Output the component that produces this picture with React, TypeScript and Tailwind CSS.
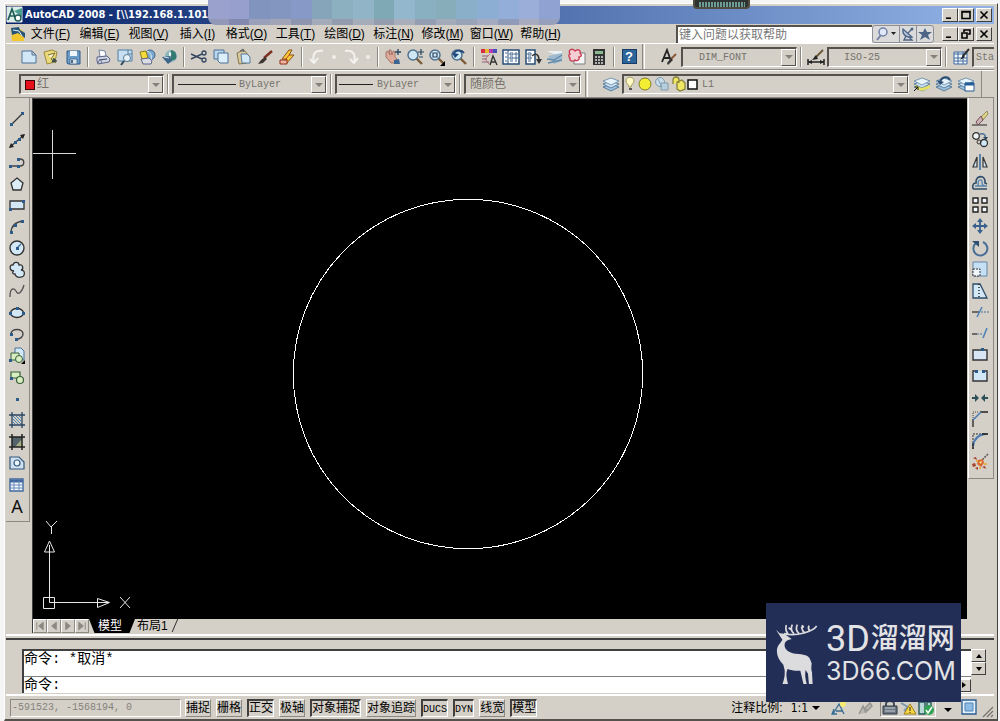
import React from "react";

type Children = { children?: React.ReactNode };

const UI = "font-['Liberation_Sans','Noto_Sans_CJK_SC',sans-serif]";
const MONO = "font-['Liberation_Mono','Noto_Sans_CJK_SC',monospace]";

const DARK = "#27445f";
const BLUE = "#4a7099";
const PALE = "#d3e8f6";

const Icon = ({ children }: Children) => (
    <svg viewBox="0 0 18 18" className="block h-[18px] w-[18px]" fill="none" aria-hidden="true">{children}</svg>
);

const ToolButton = (props: { label: string, children?: React.ReactNode }) => (
    <button title={props.label} aria-label={props.label} className="flex h-5 w-[22px] shrink-0 items-center justify-center">
        <Icon>{props.children}</Icon>
    </button>
);

const Sep = () => (
    <div className="flex w-2 shrink-0 justify-center">
        <div className="h-5 w-0.5 border-l border-r border-l-[#8c8983] border-r-white"/>
    </div>
);

const Dot = () => <div className="flex w-3 shrink-0 justify-center"><div className="h-1 w-1 rounded-full bg-[#f0eeea]"/></div>;

const Layers = () => (
    <>
        <path d="M1 12l8-3 8 3-8 4z" fill="#9fc3df" stroke="#41688a" strokeWidth=".8"/>
        <path d="M1 9l8-3 8 3-8 4z" fill="#cfe4f3" stroke="#41688a" strokeWidth=".8"/>
        <path d="M1 6l8-3 8 3-8 4z" fill="#e8f4fb" stroke="#5c83a5" strokeWidth=".8"/>
    </>
);

const Lens = () => (
    <>
        <path d="M10 10l6 6" stroke="#7c5a36" strokeWidth="2.4"/>
        <circle cx="7" cy="7" r="5" fill="#cfe7f5" stroke="#52718d" strokeWidth="1.5"/>
    </>
);

// standard toolbar, one array per separated group
const standardTools = [
    [
        { label: "新建", art: <path d="M2 3h10l4 4v8H2z M12 3v4h4" fill={PALE} stroke={BLUE}/> },
        {
            label: "打开", art: <>
                <path d="M2 4l8-2 5 2-2 10-8 2z" fill="#e9d979" stroke="#9b8a3c"/>
                <path d="M6 7l7-2-4 6 5 4" fill="#f9f4c6" stroke="#776a35"/>
                <path d="M15 13l-5 1 2-4" fill="#3e4d4a" stroke="#3e4d4a"/>
            </>
        },
        {
            label: "保存", art: <>
                <path d="M3 3h13v13H4l-1-1z" fill="#6b9bc7" stroke="#315b86"/>
                <path d="M6 3h7v5H6z" fill="#eef6fb"/><path d="M6 11h7v5H6z" fill="#d8e4ed" stroke="#315b86" strokeWidth=".7"/>
                <path d="M8 12v3" stroke="#27445f" strokeWidth="1.5"/>
            </>
        },
    ],
    [
        {
            label: "打印", art: <>
                <path d="M5 2l6 1 1 5-6 1z" fill="#fff" stroke="#7885a8"/>
                <path d="M3 9l10-1 3 3-1 3-11 2-1-3z" fill="#cfd4e4" stroke="#5d6688"/>
                <path d="M5 12l8-1" stroke="#3c4560"/><circle cx="6" cy="14" r="1.5" fill="#fff" stroke="#5d6688"/>
            </>
        },
        {
            label: "打印预览", art: <>
                <path d="M2 2h14v11H2z" fill="#c7dff0" stroke="#4f7da4"/><path d="M12 2v4h4" stroke="#4f7da4"/>
                <circle cx="11" cy="10" r="3.5" fill="#e6f3fa" stroke="#5d7b92"/><path d="M8 13l-3 4" stroke="#2f4b63" strokeWidth="2"/>
            </>
        },
        {
            label: "发布", art: <>
                <circle cx="12" cy="7" r="5" fill="#7aa8cf" stroke="#3d658a"/><path d="M9 3c4 2 5 5 4 9" stroke="#e6f2f9"/>
                <path d="M2 4l6-1 2 7-6 1z" fill="#f3db3c" stroke="#8d7c18"/>
                <path d="M3 11l8-1 3 3-1 3H5z" fill="#dadde6" stroke="#5d6688"/>
            </>
        },
        {
            label: "三维DWF", art: <>
                <circle cx="11" cy="8" r="6" fill="#88b7bd"/><path d="M11 2c5 1 6 5 5 9l-5 2z" fill="#347a72"/>
                <path d="M9 4c3 0 3 4 0 5" fill="#e9f5ef"/><path d="M2 9l8-1 2 5-4 3z" fill="#3d6689"/><path d="M4 9l5 1" stroke="#cfe0ee"/>
            </>
        },
    ],
    [
        {
            label: "剪切", art: <>
                <path d="M1 6l11 5M1 11l11-5" stroke="#34475e" strokeWidth="1.4"/>
                <circle cx="14" cy="5" r="2" stroke="#34475e" strokeWidth="1.3"/><circle cx="14" cy="12" r="2" stroke="#34475e" strokeWidth="1.3"/>
            </>
        },
        { label: "复制", art: <><path d="M2 2h10v9H2z" fill="#b8d5ea" stroke={BLUE}/><path d="M6 5h10v10H8l-2-2z" fill="#dceefa" stroke={BLUE}/></> },
        {
            label: "粘贴", art: <>
                <path d="M3 5l7-3 5 6-2 7-8 1z" fill="#d9caa0" stroke="#857447"/>
                <path d="M7 6h6l3 3v6H8z" fill="#d3e8f6" stroke="#597c98"/><path d="M6 3l3-2 1 3" fill="#777" stroke="#666"/>
            </>
        },
        { label: "特性匹配", art: <><path d="M16 3L8 10" stroke="#7c2f20" strokeWidth="2.4"/><path d="M9 9l2 2-4 4-5 1 3-4z" fill="#3c3631"/></> },
        {
            label: "块编辑器", art: <>
                <path d="M11 2L4 11h5l-1 5 8-9h-5l3-5z" fill="#f5cc39" stroke="#8c4f18"/>
                <path d="M2 12h7v4H2z" fill="#f1b7a0" stroke="#8c2f18"/><path d="M12 6l-5 6" stroke="#c43c22"/>
            </>
        },
    ],
];

const undoTools = [
    { label: "放弃", art: <path d="M15 3C6 2 4 7 6 15M2 11l4 4 4-5" stroke="#f4f2ee" strokeWidth="2"/> },
    { label: "重做", art: <path d="M3 3c9-1 11 4 9 12M8 11l4 4 4-5" stroke="#f4f2ee" strokeWidth="2"/> },
];

const viewTools = [
    [
        {
            label: "实时平移", art: <>
                <path d="M2 4l2-1 2 4-1-5 2 0 1 5 1-4 2 1v5l2 2-3 4H7L2 9z" fill="#dcaa9a" stroke="#9d6559" strokeWidth=".8"/>
                <path d="M14 1v6M11 4h6" stroke={DARK} strokeWidth="1.3"/><path d="M10 12l5-1 1 5h-6z" fill="#3d6593"/>
            </>
        },
        { label: "实时缩放", art: <><Lens/><path d="M15 1v6M12 4h6M13 9h4" stroke={DARK} strokeWidth="1.2"/></> },
        { label: "窗口缩放", art: <><Lens/><path d="M5 5h4v4H5z" stroke={DARK} strokeWidth="1.2"/><path d="M17 13v5h-5z" fill="#000"/></> },
        { label: "缩放上一个", art: <><Lens/><path d="M4 7c0-5 7-6 10-2" stroke="#1e477a" strokeWidth="2"/><path d="M2 5l3 5 4-4z" fill="#1e477a"/></> },
    ],
    [
        {
            label: "特性", art: <>
                <path d="M1 1h4v4H1z" fill="#d52e44"/><path d="M5 1h4v4H5z" fill="#e6b72f"/><path d="M9 1h4v4H9z" fill="#b53bb0"/><path d="M13 1h4v4h-4z" fill="#4851b8"/>
                <path d="M2 8h6M2 11h5M2 14h7" stroke="#8f6179"/><path d="M10 6l-5 5 4 5" stroke="#bc7183"/><path d="M10 17l3-9 4 9M11 14h5" stroke="#333" strokeWidth="1.4"/>
            </>
        },
        {
            label: "设计中心", art: <>
                <path d="M1 2h16v14H1z" fill="#fff" stroke="#294e79" strokeWidth="1.5"/>
                <path d="M6 2v14" stroke="#294e79"/><path d="M3 5h2M3 9h2M3 13h2M8 5h3v2H8zM13 5h2v2h-2zM8 9h3v2H8zM13 9h2v2h-2zM8 13h3M13 13h2" stroke="#426994"/>
            </>
        },
        {
            label: "工具选项板", art: <>
                <path d="M2 2h9v14H2z" fill="#fff" stroke="#294e79" strokeWidth="1.5"/><path d="M4 5h3v2H4zM4 9h3v2H4zM4 13h3" stroke="#426994"/>
                <path d="M8 8c4-4 7-1 7 4" stroke="#333" strokeWidth="1.4"/><path d="M12 11h6l-3 5z" fill="#333"/>
            </>
        },
        { label: "图纸集", art: <><path d="M1 3h15v3H8z" fill="#e9f1f6"/><path d="M2 8l14-3v8l-8 3z" fill="#9ebad0"/><path d="M1 11l7 1 8-5M2 15l14-3" stroke="#628aa9" strokeWidth="1.3"/></> },
        {
            label: "标记集", art: <>
                <path d="M6 5h11v11H6z" fill="#f5f5f5" stroke="#7d7d7d"/>
                <path d="M2 2c3-2 4 0 5 1 3-3 6 0 5 2 3 3 0 4-1 4 1 4-3 4-4 3-2 2-6 1-5-2-2-2-1-4 0-4-1-2-1-3 0-4z" fill="#f4ced4" stroke="#c63f57" strokeWidth="1.4"/>
            </>
        },
        {
            label: "计算器", art: <>
                <path d="M3 1h12v16H3z" fill="#333"/><path d="M5 3h8v3H5z" fill="#8bb98e"/>
                <path d="M5 9h8M5 12h8M5 15h8" stroke="#ddd" strokeWidth="1.6" strokeDasharray="2 1"/>
            </>
        },
    ],
];

const N = ({ x, y }: { x: number, y: number }) => <rect x={x - 1} y={y - 1} width="3" height="3" fill="#2d5b8b"/>;

const drawTools = [
    { label: "直线", art: <><path d="M3 15L15 3" stroke="#333" strokeWidth="1.3"/><N x={3} y={14}/><N x={14} y={3}/></> },
    { label: "构造线", art: <><path d="M2 15L16 3" stroke="#333" strokeWidth="1.3"/><path d="M1 16l2-5 3 4zM17 2l-5 1 3 4z" fill="#222"/><N x={7} y={10}/><N x={11} y={7}/></> },
    { label: "多段线", art: <><path d="M2 13h10M10 6h2c5 0 5 7 0 7" stroke="#444" strokeWidth="1.4"/><N x={2} y={13}/><N x={10} y={13}/><N x={10} y={6}/></> },
    { label: "正多边形", art: <path d="M9 3l6 5-2 7H5L3 8z" fill="#dcedf7" stroke="#333" strokeWidth="1.3"/> },
    { label: "矩形", art: <><path d="M2 5h14v8H2z" fill={PALE} stroke="#333" strokeWidth="1.3"/><N x={2} y={13}/><N x={15} y={5}/></> },
    { label: "圆弧", art: <><path d="M3 15C3 8 8 4 15 3" stroke="#444" strokeWidth="1.3"/><N x={3} y={14}/><N x={7} y={7}/><N x={14} y={3}/></> },
    { label: "圆", art: <><circle cx="9" cy="9" r="7" fill={PALE} stroke="#333" strokeWidth="1.4"/><path d="M9 9l4-4" stroke={BLUE} strokeWidth="1.4"/><N x={9} y={9}/></> },
    { label: "修订云线", art: <path d="M6 10C1 10 1 3 5 4c1-4 6-3 6 0 4-1 5 4 2 5 5 0 4 7 0 7-3 1-6-1-6-3-3 0-3-2-1-3z" fill={PALE} stroke="#333" strokeWidth="1.3"/> },
    { label: "样条曲线", art: <path d="M2 15C2 5 6 6 8 9c2 5 6 1 8-6" stroke="#555" strokeWidth="1.3"/> },
    { label: "椭圆", art: <><ellipse cx="9" cy="9" rx="6.5" ry="4.5" fill={PALE} stroke="#333" strokeWidth="1.4"/><N x={2} y={9}/><N x={15} y={9}/><N x={9} y={4}/></> },
    { label: "椭圆弧", art: <><path d="M3 9c0-6 12-6 12 0 0 3-3 5-6 5" stroke="#444" strokeWidth="1.4"/><N x={3} y={9}/><N x={8} y={14}/></> },
    {
        label: "插入块", art: <>
            <path d="M7 1h6l3 3v9H7z" fill={PALE} stroke={BLUE}/><path d="M3 6h8v7H3z" fill="#d9edc3" stroke="#385f37"/>
            <circle cx="11" cy="12" r="3.5" stroke="#385f37" fill="#d9edc3"/><path d="M17 13v4h-4z" fill="#000"/><N x={2} y={13}/>
        </>
    },
    { label: "创建块", art: <><path d="M3 4h9v6H3z" fill="#d9edc3" stroke="#385f37" strokeWidth="1.2"/><circle cx="12" cy="12" r="3.5" fill="#d9edc3" stroke="#385f37" strokeWidth="1.2"/><N x={3} y={10}/></> },
    { label: "点", art: <N x={9} y={9}/> },
    { label: "图案填充", art: <><path d="M4 1v16M14 1v16M1 4h16M1 14h16" stroke={DARK} strokeWidth="1.3"/><path d="M5 5l8 8M8 5l5 5M5 8l5 5M11 5l2 2M5 11l2 2" stroke="#4c82ac"/></> },
    { label: "渐变色", art: <><path d="M4 4h10v10H4z" fill="#55636b"/><path d="M14 6v8H7z" fill="#a7b282"/><path d="M4 1v16M14 1v16M1 4h16M1 14h16" stroke="#222" strokeWidth="1.5"/></> },
    { label: "面域", art: <><path d="M2 3h9l5 5v7H2z" fill="#cfe0f1" stroke="#34577b" strokeWidth="1.2"/><circle cx="9" cy="9" r="3" fill="#edf6fb" stroke="#34577b" strokeWidth="1.2"/></> },
    { label: "表格", art: <><path d="M2 3h13v12H2z" fill="#f1f7fb" stroke="#41699e" strokeWidth="1.4"/><path d="M2 5h13" stroke="#41699e" strokeWidth="3"/><path d="M2 9h13M2 12h13M6 5v10M11 5v10" stroke="#6a8cba"/></> },
];

const modifyTools = [
    { label: "删除", art: <><path d="M1 15h15" stroke="#222"/><path d="M16 1l-6 6 2 3 5-6z" fill="#ddd185" stroke="#777141" strokeWidth=".7"/><path d="M10 6l-5 6 2 3 5-5z" fill="#c9b3b6" stroke="#7b4b55"/></> },
    { label: "复制对象", art: <><circle cx="5" cy="5" r="3.3" fill="#eef5f9" stroke="#333" strokeWidth="1.3"/><circle cx="13" cy="12" r="3.5" fill={PALE} stroke="#333" strokeWidth="1.3"/><circle cx="8" cy="11" r="2" stroke="#333"/><path d="M9 3c4-1 6 1 5 4" stroke={BLUE} strokeWidth="1.5"/><path d="M12 6h5l-2 3z" fill={DARK}/></> },
    { label: "镜像", art: <><path d="M6 4v10H2zM12 4v10h4z" fill={PALE} stroke="#333" strokeWidth="1.2"/><path d="M9 1v16" stroke="#3c6fa5" strokeWidth="1.6"/></> },
    { label: "偏移", art: <><path d="M2 15h14M2 15C1 10 3 9 5 9c-1-8 10-9 9 0l2 1" stroke="#2e4c68" strokeWidth="1.6"/><path d="M4 12h12M5 12c2 0 3-1 2-4 1-3 5-3 4 1 0 3 3 3 5 3" stroke="#5a87b0" strokeWidth="1.4"/></> },
    { label: "阵列", art: <path d="M2 2h5v5H2zM11 2h5v5h-5zM2 11h5v5H2zM11 11h5v5h-5z" fill="#f4f8fb" stroke="#222" strokeWidth="1.4"/> },
    { label: "移动", art: <><path d="M9 3v12M3 9h12" stroke="#38608e" strokeWidth="1.8"/><path d="M9 1l3 4H6zM9 17l3-4H6zM1 9l4-3v6zM17 9l-4-3v6z" fill="#38608e"/></> },
    { label: "旋转", art: <><path d="M5 4a7 7 0 1 0 7-1" stroke="#496f96" strokeWidth="2"/><path d="M1 2h7v6z" fill="#2f4e70"/></> },
    { label: "缩放", art: <><path d="M2 2h14v14H2z" fill="#c5dff4" stroke="#6686a8"/><path d="M2 9h7v7H2z" fill="#eff6fa" stroke="#333" strokeDasharray="2 1"/></> },
    { label: "拉伸", art: <><path d="M2 2h7l7 14H2z" fill={PALE} stroke="#2e4c68" strokeWidth="1.3"/><path d="M8 2v14" stroke="#222" strokeDasharray="1 2" strokeWidth="1.5"/></> },
    { label: "修剪", art: <><path d="M1 9h7" stroke="#333" strokeWidth="1.3"/><path d="M10 9h8" stroke="#4a7099" strokeDasharray="2 1"/><path d="M6 14l5-10" stroke="#4f82b6" strokeWidth="1.6"/></> },
    { label: "延伸", art: <><path d="M1 10h5" stroke="#333" strokeWidth="1.3"/><path d="M6 10h6" stroke="#4a7099" strokeDasharray="2 1"/><path d="M12 14l4-10" stroke="#4f82b6" strokeWidth="1.6"/></> },
    { label: "打断于点", art: <><path d="M2 4h14v10H2z" fill="#d7e5f4" stroke="#333" strokeWidth="1.4"/><N x={11} y={3}/></> },
    { label: "打断", art: <><path d="M5 4H2v10h14V4h-3" fill={PALE} stroke="#333" strokeWidth="1.4"/><N x={5} y={4}/><N x={12} y={4}/></> },
    { label: "合并", art: <><path d="M1 9h5M12 9h5" stroke="#2d5058" strokeWidth="1.8"/><path d="M4 5l4 4-4 4zM14 5l-4 4 4 4z" fill="#2d5058"/></> },
    { label: "倒角", art: <><path d="M9 2h8M2 9v8" stroke="#222" strokeWidth="1.3"/><path d="M2 2h6M2 3v6" stroke="#444" strokeDasharray="1 1"/><path d="M2 10l8-8" stroke="#4a7cb0" strokeWidth="1.6"/></> },
    { label: "圆角", art: <><path d="M2 2h15M2 3v14" stroke="#333" strokeDasharray="2 1"/><path d="M2 14C3 7 6 3 14 2" stroke="#4a7cb0" strokeWidth="2"/><path d="M2 11v6M11 2h6" stroke="#222" strokeWidth="1.3"/></> },
    {
        label: "分解", art: <>
            <path d="M17 1l-6 6" stroke="#555" strokeWidth="1.5" strokeDasharray="2 1"/>
            <path d="M7 7l5-1 1 4-3 4-4-3z" fill="#d8682f"/><path d="M8 9l3-1-1 3z" fill="#f8e29a"/>
            <path d="M2 5l3-1 1 3zM1 11l3-1 1 3-3 1zM4 15l3-1v3zM11 14l3-1 1 3z" fill="#a8402a"/><path d="M5 7h2v2H5zM8 14h2v2H8zM13 10h3v2h-3z" fill="#e8b04c"/>
        </>
    },
];

const menus = [
    ["文件", "F"], ["编辑", "E"], ["视图", "V"], ["插入", "I"], ["格式", "O"], ["工具", "T"],
    ["绘图", "D"], ["标注", "N"], ["修改", "M"], ["窗口", "W"], ["帮助", "H"],
];

const toggles = [
    { name: "捕捉", on: false }, { name: "栅格", on: false }, { name: "正交", on: true }, { name: "极轴", on: false },
    { name: "对象捕捉", on: true }, { name: "对象追踪", on: false }, { name: "DUCS", on: true }, { name: "DYN", on: true },
    { name: "线宽", on: false }, { name: "模型", on: true },
];

const mosaicTop = ["bg-[#9aa1cc]", "bg-[#97a0cc]", "bg-[#8194bd]", "bg-[#8296c0]", "bg-[#8799c6]", "bg-[#86a5ba]", "bg-[#8cb0bf]", "bg-[#91b4c6]", "bg-[#7fa9b5]", "bg-[#93b8cd]", "bg-[#89b0c0]", "bg-[#88adba]", "bg-[#8aafc8]", "bg-[#8baed2]", "bg-[#93aed8]", "bg-[#9baed9]", "bg-[#8fa2d2]"];
const mosaicBottom = ["bg-[#9198b8]", "bg-[#8389ae]", "bg-[#9ba0ba]", "bg-[#a0a5b8]", "bg-[#8e95ae]", "bg-[#a3aab8]", "bg-[#929cae]", "bg-[#a6adba]", "bg-[#949db0]", "bg-[#a8afbb]", "bg-[#939eb2]", "bg-[#a3abba]", "bg-[#98a3b8]", "bg-[#a4abc0]", "bg-[#8f9bb8]", "bg-[#a6acbd]", "bg-[#969fbc]"];

const DropDown = (props: { label: string, value: string, box: string, pad: string, children?: React.ReactNode }) => (
    <div className={"relative h-5 border border-t-2 border-l-2 border-t-[#55524d] border-l-[#55524d] border-r-white border-b-white " + props.box}>
        <select aria-label={props.label} className={"block h-full w-full appearance-none bg-[#d4d0c8] text-[#75726c] outline-none " + props.pad}>
            <option>{props.value}</option>
        </select>
        {props.children}
        <span className="pointer-events-none absolute top-0 right-0 flex h-full w-[15px] items-center justify-center border border-t-white border-l-white border-r-[#55524d] border-b-[#55524d] bg-[#d4d0c8]">
            <svg viewBox="0 0 8 4" className="h-1 w-2"><path d="M0 0h8L4 4z" fill="#85827c"/></svg>
        </span>
    </div>
);

const WindowButton = (props: { label: string, d: string }) => (
    <button aria-label={props.label} className="flex h-[14px] w-4 items-center justify-center border border-t-white border-l-white border-r-[#404040] border-b-[#404040] bg-[#d4d0c8]">
        <svg viewBox="0 0 10 10" className="h-[10px] w-[10px]" fill="none"><path d={props.d} stroke="#000" strokeWidth="1.6"/></svg>
    </button>
);

const WindowButtons = (props: { restore?: boolean }) => (
    <div className="flex">
        <WindowButton label="最小化" d="M1 8.2h5"/>
        <WindowButton label={props.restore ? "还原" : "最大化"} d={props.restore ? "M3 3V1h6v4H7M1 4h5v5H1z" : "M1 1.5h8v7H1zM1 2h8"}/>
        <div className="w-0.5"/>
        <WindowButton label="关闭" d="M1.500 1.500l7 7M8.500 1.500l-7 7"/>
    </div>
);

const TitleBar = () => (
    <div className="flex h-[18px] items-center bg-linear-to-r from-[#0a246a] to-[#92b3e6] pr-0.5">
        <svg viewBox="0 0 18 18" className="mr-px h-[18px] w-[18px]" fill="none">
            <path d="M1 1h15v15H1z" fill="#d8eee6" stroke="#e6e6e6"/>
            <path d="M2 14L6 3l4 11M3 10h6" stroke="#215c58" strokeWidth="1.7"/><path d="M8 5l8-3v9" fill="#4c9e91"/>
            <circle cx="12" cy="12" r="3" stroke="#215c58" strokeWidth="1.4" fill="#fff"/>
        </svg>
        <h1 className="flex-1 text-[11px] font-bold whitespace-pre text-white font-['DejaVu_Sans_Condensed','Liberation_Sans',sans-serif]">{"AutoCAD 2008 - [\\\\192.168.1.101"}</h1>
        <WindowButtons/>
    </div>
);

const MenuBar = () => (
    <div className="flex h-[19px] items-center pr-0.5">
        <svg viewBox="0 0 16 16" className="ml-1 h-4 w-4">
            <path d="M1 2h8l5 4v9H2z" fill="#f1c62e"/><path d="M1 2l8-1 1 3 5 3v5L8 7 2 9z" fill="#26557c"/><path d="M3 4l6 1 3 5" stroke="#e6f2f3" fill="none"/>
        </svg>
        <nav className="flex flex-1 items-center">
            {menus.map(([name, key]) => (
                <button key={key} className="h-[18px] w-[49px] shrink-0 text-[12px] leading-[18px] whitespace-nowrap text-black">
                    {name}(<span className="underline">{key}</span>)
                </button>
            ))}
        </nav>
        <input aria-label="帮助搜索" placeholder="键入问题以获取帮助" className="h-[18px] w-[196px] border-t-2 border-l-2 border-t-[#55524d] border-l-[#55524d] bg-white px-px text-[12px] leading-4 outline-none placeholder:text-[#777]"/>
        <div className="mr-2 flex h-[18px] items-center rounded-[3px] border border-[#8f8f98] bg-[#dcdbdc]">
            <button aria-label="搜索" className="flex w-[27px] items-center justify-between border-r border-[#8f8f98] px-px">
                <svg viewBox="0 0 16 16" className="h-4 w-4" fill="none"><path d="M3 14l4-5" stroke="#7380a5" strokeWidth="2"/><circle cx="9" cy="6" r="4" fill="#dfe8f8" stroke="#7380a5" strokeWidth="1.500"/></svg>
                <svg viewBox="0 0 5 3" className="mr-0.5 h-[3px] w-[5px]"><path d="M0 0h5L2.500 3z" fill="#222"/></svg>
            </button>
            <button aria-label="通讯中心" className="border-r border-[#8f8f98]">
                <svg viewBox="0 0 16 16" className="h-4 w-4" fill="none"><path d="M3 3c-1 6 4 9 9 8z" fill="#b9c6dc" stroke="#4d6486" strokeWidth="1.400"/><path d="M8 7l4-4M6 10l-2 4h8l-3-3" stroke="#4d6486" strokeWidth="1.400"/><circle cx="12" cy="3" r="1.500" fill="#4d6486"/></svg>
            </button>
            <button aria-label="收藏夹">
                <svg viewBox="0 0 16 16" className="h-4 w-4"><path d="M8 2l2 4h5l-4 3 2 5-5-3-5 3 2-5-4-3h5z" fill="#4d6486"/></svg>
            </button>
        </div>
        <WindowButtons restore/>
    </div>
);

const StandardBar = () => (
    <div className={"flex h-[27px] items-center overflow-hidden border-t border-b border-t-white border-b-[#8c8983] pl-3 text-[10px] " + MONO}>
        {standardTools.map((group, i) => (
            <React.Fragment key={i}>
                {group.map(t => <ToolButton key={t.label} label={t.label}>{t.art}</ToolButton>)}
                <Sep/>
            </React.Fragment>
        ))}
        {undoTools.map(t => <React.Fragment key={t.label}><ToolButton label={t.label}>{t.art}</ToolButton><Dot/></React.Fragment>)}
        {viewTools.map((group, i) => (
            <React.Fragment key={i}>
                <Sep/>
                {group.map(t => <ToolButton key={t.label} label={t.label}>{t.art}</ToolButton>)}
            </React.Fragment>
        ))}
        <Sep/>
        <button aria-label="帮助" className="flex w-[22px] shrink-0 justify-center">
            <span className="h-[15px] w-[15px] border border-[#163c69] bg-[#2e6599] text-center text-[13px] leading-[14px] font-bold text-white font-['Liberation_Sans',sans-serif]">?</span>
        </button>
        <div className="mr-3 ml-0.5 h-[27px] w-[3px] shrink-0 border-l border-r border-l-[#8c8983] border-r-white"/>
        <ToolButton label="文字样式">
            <path d="M3 14L8 2l4 11M5 10h6" stroke="#222" strokeWidth="1.800"/><path d="M17 6l-5 5" stroke="#8b5a37" strokeWidth="2"/><path d="M12 10l2 2-5 5-1-2z" fill="#333"/>
        </ToolButton>
        <div className="w-0.5 shrink-0"/>
        <DropDown label="文字样式" value="DIM_FONT" box="w-[116px] shrink-0" pad="pl-4"/>
        <Sep/>
        <ToolButton label="标注样式">
            <path d="M1 14h16M1 11v6M17 11v6" stroke="#222" strokeWidth="1.500"/><path d="M1 14l4-2v4zM17 14l-4-2v4z" fill="#222"/><path d="M16 2L8 10" stroke="#6d5a37" strokeWidth="2"/><path d="M9 7l2 4-6 1z" fill="#222"/>
        </ToolButton>
        <DropDown label="标注样式" value="ISO-25" box="w-[115px] shrink-0" pad="pl-[15px]"/>
        <Sep/>
        <ToolButton label="表格样式">
            <path d="M2 4h13v12H2z" fill="#f1f7fb" stroke="#41699e"/><path d="M2 6h13M2 10h13M2 13h13M6 4v12M11 4v12" stroke="#41699e"/><path d="M17 1l-6 7" stroke="#333" strokeWidth="2"/><path d="M11 7l2 2-5 3z" fill="#222"/>
        </ToolButton>
        <DropDown label="表格样式" value="Standard" box="w-[115px] shrink-0" pad="pl-0.5"/>
    </div>
);

const PropertiesBar = () => (
    <div className={"flex h-[27px] items-center border-t border-t-white pl-[13px] text-[10px] " + MONO}>
        <DropDown label="颜色" value="红" box="w-[145px]" pad="pl-4 text-[12px]">
            <span className="absolute top-1 left-1 h-[10px] w-[10px] border border-[#3b0000] bg-[#e8101a]"/>
        </DropDown>
        <Sep/>
        <DropDown label="线型" value="ByLayer" box="w-[155px]" pad="pl-[65px]">
            <span className="absolute top-2 left-1 h-px w-[58px] bg-[#222]"/>
        </DropDown>
        <Sep/>
        <DropDown label="线宽" value="ByLayer" box="w-[121px]" pad="pl-10">
            <span className="absolute top-2 left-0.5 h-px w-[34px] bg-[#222]"/>
        </DropDown>
        <Sep/>
        <DropDown label="打印样式" value="随颜色" box="w-[117px]" pad="pl-1 text-[12px]"/>
        <div className="mr-3 ml-1 h-[27px] w-[3px] border-l border-r border-l-[#8c8983] border-r-white"/>
        <ToolButton label="图层特性管理器"><Layers/></ToolButton>
        <div className="min-w-0 flex-1">
            <DropDown label="图层" value="L1" box="w-full" pad="pl-[78px]">
                <svg viewBox="0 0 76 16" className="absolute top-0 left-0 h-4 w-[76px]" fill="none">
                    <path d="M5 11c0-3-3-3-3-6 0-5 8-5 8 0 0 3-3 3-3 6z" fill="#fff9c4" stroke="#a39a58"/><path d="M5 13h3" stroke="#555" strokeWidth="2"/>
                    <circle cx="21" cy="8" r="6" fill="#f3ee33" stroke="#807d27"/>
                    <circle cx="36" cy="6" r="4.500" fill="#c9dce7" stroke="#7f9db1"/><path d="M37 7h7v7h-7zM34 3l4 8" fill="#b7cedd" stroke="#7f9db1"/>
                    <path d="M49 8V4c0-4 6-4 6 0v3M53 6l5-2 3 3v6l-5 2-3-2z" fill="#f0e865" stroke="#85803a" strokeWidth="1.300"/>
                    <path d="M64 4h9v9h-9z" fill="#fff" stroke="#111" strokeWidth="1.500"/>
                </svg>
            </DropDown>
        </div>
        <div className="flex pl-0.5">
            <ToolButton label="将对象的图层置为当前"><Layers/><path d="M2 10l7 3 8-3v3l-8 3-6-2z" fill="#e5e164"/><path d="M1 16l4-4M5 15v-3H2" stroke="#111"/></ToolButton>
            <ToolButton label="上一个图层"><Layers/><path d="M5 7c2-6 8-6 10-2" stroke="#294c73" strokeWidth="2"/><path d="M2 5l3 5 4-3z" fill="#294c73"/></ToolButton>
            <ToolButton label="图层状态管理器"><Layers/><path d="M8 8h9v8H8z" fill="#fff" stroke="#245c98"/><path d="M8 9h9" stroke="#245c98" strokeWidth="3"/></ToolButton>
        </div>
        <div className="mr-3 ml-1 h-[27px] w-px bg-[#8c8983]"/>
    </div>
);

const Drawing = () => (
    <div className="relative min-h-[400px] flex-1 overflow-hidden bg-black">
        {/* crosshair and the circle */}
        <svg className="absolute top-0 left-0 h-[520px] w-[935px]" fill="none" stroke="#fff" strokeWidth="1" shapeRendering="crispEdges" aria-label="图形">
            <path d="M0 54.500h43M19.500 31v49" stroke="#d8d8d8"/>
            <circle cx="435" cy="275" r="174.700"/>
        </svg>
        {/* UCS icon */}
        <svg viewBox="0 0 110 110" className="absolute bottom-0 left-0 h-[110px] w-[110px]" fill="none" stroke="#e8e8e8" strokeWidth="1">
            <path d="M10.500 88.500h11v11h-11zM16.500 93.500V43M16.500 93.500H76M16.500 32l-5 11h10zM76.500 93.500l-12-4v9z M16.500 36v7M65 93.500l10 0"/>
            <path d="M13 12l5 6 6-6M18.500 18v7M87 88l10 11M97 88L87 99"/>
        </svg>
    </div>
);

const SheetTabs = () => (
    <div className="flex h-[14px] items-stretch text-[12px] leading-[14px]">
        {[["第一个", "M3 2v8M10 2v8L5 6z"], ["上一个", "M9 2v8L4 6z"], ["下一个", "M4 2v8l5-4z"], ["最后一个", "M3 2v8l5-4zM10 2v8"]].map(([label, d]) => (
            <button key={label} aria-label={label} className="w-[14px] border border-t-white border-l-white border-r-[#8c8983] border-b-[#8c8983]">
                <svg viewBox="0 0 13 12" className="h-3 w-3"><path d={d} fill="#8c8983" stroke="#8c8983"/></svg>
            </button>
        ))}
        <button className="w-[46px] bg-black pr-1 text-center text-white [clip-path:polygon(0_0,100%_0,88%_100%,12%_100%)]">模型</button>
        <button className="flex items-stretch pl-0.5 text-black">
            布局1
            <svg viewBox="0 0 12 15" className="h-[14px] w-3"><path d="M4 14l6-14" stroke="#222"/></svg>
        </button>
    </div>
);

const ScrollButton = (props: { label: string, d: string }) => (
    <button aria-label={props.label} className="flex h-[13px] w-[15px] items-center justify-center border border-t-white border-l-white border-r-[#404040] border-b-[#404040] bg-[#d4d0c8]">
        <svg viewBox="0 0 6 6" className="h-1.5 w-1.5"><path d={props.d} fill="#000"/></svg>
    </button>
);

const CommandLine = () => (
    <div className={"mt-[9px] mr-2 ml-4 flex text-[14px] leading-4 text-black " + MONO}>
        <div className="min-w-0 flex-1 border-t-2 border-l-2 border-[#404040] bg-white">
            <div className="h-[26px] border-b border-[#808080] whitespace-pre">命令: *取消*</div>
            <label className="flex h-4 items-center">
                命令:
                <input className="h-4 min-w-0 flex-1 bg-white outline-none"/>
                <ScrollButton label="向右滚动" d="M1 0v6l4-3z"/>
            </label>
        </div>
        <div className="flex flex-col">
            <ScrollButton label="向上滚动" d="M0 5h6L3 1z"/>
            <ScrollButton label="向下滚动" d="M0 1h6L3 5z"/>
        </div>
    </div>
);

const StatusBar = () => (
    <div className={"mt-px flex h-[25px] items-center gap-1 border-t-2 border-white pl-1 text-[12px] " + UI}>
        <output className={"h-[18px] w-[171px] border border-t-[#8c8983] border-l-[#8c8983] border-r-white border-b-white px-px text-[10px] leading-4 whitespace-pre text-[#85827c] " + MONO}>-591523, -1568194, 0</output>
        <div className="flex gap-[5px]">
            {toggles.map(t => (
                <button
                    key={t.name}
                    aria-pressed={t.on}
                    className={t.on
                        ? "h-[18px] border border-t-2 border-l-2 border-t-[#404040] border-l-[#404040] border-r-white border-b-white leading-[15px] text-black"
                        : "h-[18px] border border-t-white border-l-white border-r-[#8c8983] border-b-[#8c8983] leading-4 text-black"}
                >
                    <span className={/[A-Z]/.test(t.name) ? "text-[10px] " + MONO : ""}>{t.name}</span>
                </button>
            ))}
        </div>
        <div className="flex-1"/>
        <button className="mr-1 flex items-center text-black">
            <span className="mr-2">注释比例:</span>
            <span className="mr-1 font-['DejaVu_Sans_Condensed',sans-serif] text-[12px]">1:1</span>
            <svg viewBox="0 0 8 4" className="h-1 w-2"><path d="M0 0h8L4 4z"/></svg>
        </button>
        <ToolButton label="注释可见性"><path d="M3 15L9 5l5 10M6 12h6M4 10l-2 5h5" stroke="#376c93" strokeWidth="1.300"/><circle cx="13" cy="5" r="3" fill="#f5eb70"/></ToolButton>
        <ToolButton label="自动缩放"><path d="M3 15l4-8 3 7M9 9l5-5 2 3-5 5z" stroke="#989690" strokeWidth="1.500" fill="#bbb8b2"/></ToolButton>
        <div className="flex h-[18px] items-center border border-t-[#8c8983] border-l-[#8c8983] border-r-white border-b-white">
            <button aria-label="锁定"><Icon><path d="M5 8V5c0-4 8-4 8 0v3" stroke="#454f59" strokeWidth="2"/><path d="M2 7h14v8H2z" fill="#6c7781" stroke="#303a44"/><path d="M4 9h10M4 12h10" stroke="#c3ccd5"/></Icon></button>
            <button aria-label="通知"><Icon><path d="M2 4l7 4-4 4" stroke="#7b97ad" strokeWidth="2"/><path d="M11 5l6 10H5z" fill="#f6d741" stroke="#a18118"/><path d="M11 8v4M11 13v1" stroke="#222"/></Icon></button>
            <button aria-label="标准"><Icon><path d="M2 3h6v12H2zM10 3h4v5h-4z" fill="#b8d8d8" stroke="#26595a" strokeWidth="1.400"/><circle cx="12" cy="11" r="5" fill="#32a354"/><path d="M9 11l2 3 4-6" stroke="#fff" strokeWidth="1.500"/></Icon></button>
        </div>
        <button aria-label="状态栏菜单" className="w-4 pt-1 pl-1"><svg viewBox="0 0 8 4" className="h-1 w-2"><path d="M0 0h8L4 4z"/></svg></button>
        <button aria-label="全屏显示"><Icon><path d="M2 1h14v14H2z" fill="#e5f1fa" stroke="#2a5d8f" strokeWidth="1.300"/><path d="M5 4h8v8H5z" fill="#8fbce4" stroke="#5085b6"/></Icon></button>
        <svg viewBox="0 0 12 12" className="mt-2 h-3 w-3"><path d="M11 1L1 11M11 5l-6 6M11 9l-2 2" stroke="#77746e" strokeWidth="1.300"/></svg>
    </div>
);

const Watermark = () => (
    <div className="absolute right-[39px] bottom-[19px] flex h-[99px] w-[195px] items-center bg-[#222e56] pl-1.5 text-[#e3e3e5]">
        <svg viewBox="216 92 138 183" className="mt-px mr-2 h-[61px] w-[46px] shrink-0" fill="none" aria-label="3D66">
            <path d="M228 112l11 11 14 1 10 8 12 8-12 4c-8 4-10 10-9 18 4 17 21 22 41 23 24 2 33 6 37 20l3 8c0 8-3 13 1 27l2 38h-11l-3-34-7-11c-3 14-1 27 4 45h-10l-10-43c-16 1-28-1-38-5-6 12-4 27 2 48h-19c6-13 9-26 8-44l-4-17c-14-14-21-29-19-46 2-13 11-19 16-29z" fill="#dcdcde"/>
            <path d="M252 124c20 5 38 4 60-2 18-5 30-9 38-21M264 125c-5-7-9-16-5-27M282 124c-8-6-10-17-5-27M297 123c-9-7-10-16-5-26M313 120c-8-6-9-13-5-22M329 115c-5-5-5-9-2-15M272 112l-6-6M303 108l9-6" stroke="#dcdcde" strokeWidth="5"/>
        </svg>
        <div>
            <div className="flex h-[34px] items-center">
                <span className="text-[36px] leading-[34px] font-['Roboto',sans-serif]">3D</span>
                <span className="ml-px text-[28px] leading-[34px] font-medium font-['Roboto','Noto_Sans_CJK_SC',sans-serif]">溜溜网</span>
            </div>
            <div className="mt-0.5 text-[25px] leading-[26px] font-['Inter',sans-serif]">3D66.COM</div>
        </div>
    </div>
);

export default function App() {
    return (
        <div className={"relative flex min-h-screen flex-col overflow-hidden bg-[#f5f5f5] pt-[3px] pr-0.5 pl-1 " + UI}>
            <div className="flex min-w-0 flex-1 flex-col border-t border-r border-b-2 border-l border-t-white border-l-white border-r-[#404040] border-b-[#55524d] bg-[#d4d0c8] pt-0.5 pr-[3px] pl-px">
                <TitleBar/>
                <MenuBar/>
                <StandardBar/>
                <PropertiesBar/>
                <main className="flex flex-1 items-stretch border-t border-[#8c8983]">
                    <aside className="mr-0.5 h-[424px] w-6 border-r border-b border-[#8c8983] pt-[11px] pb-[5px]">
                        <div className="flex h-full flex-col justify-between">
                            {drawTools.map(t => <ToolButton key={t.label} label={t.label}>{t.art}</ToolButton>)}
                            <button aria-label="多行文字" className="h-5 w-[22px] text-center text-[18px] leading-5 text-[#111] font-['Noto_Sans',sans-serif]">A</button>
                        </div>
                    </aside>
                    <section className="flex min-w-0 flex-1 flex-col border-t border-l border-[#404040]">
                        <Drawing/>
                        <SheetTabs/>
                    </section>
                    <aside className="ml-px h-[381px] w-[26px] border-r border-b border-l border-r-[#8c8983] border-b-[#8c8983] border-l-white pt-[11px] pb-1.5">
                        <div className="flex h-full flex-col justify-between">
                            {modifyTools.map(t => <ToolButton key={t.label} label={t.label}>{t.art}</ToolButton>)}
                        </div>
                    </aside>
                </main>
                <div className="mt-px h-1.5 border-t-2 border-b-2 border-t-white border-b-[#404040]"/>
                <CommandLine/>
                <StatusBar/>
            </div>

            {/* blurred out file name over the title */}
            <div className="absolute top-0 left-[208px] flex h-[25px] w-[352px] flex-col overflow-hidden rounded-b-lg">
                <div className="flex flex-1">{mosaicTop.map(c => <div key={c} className={"flex-1 " + c}/>)}</div>
                <div className="flex h-[6px]">{mosaicBottom.map(c => <div key={c} className={"flex-1 " + c}/>)}</div>
            </div>

            <div className="absolute top-0 left-[693px] flex h-[9px] w-[57px] items-start justify-center rounded-b border-x-2 border-b-2 border-[#514c3d] bg-[#2d3330] pt-0.5">
                <div className="h-[5px] w-[46px] bg-[repeating-linear-gradient(90deg,#6f9b95_0_2px,#2d3330_2px_3px)]"/>
            </div>

            <Watermark/>
        </div>
    );
}
